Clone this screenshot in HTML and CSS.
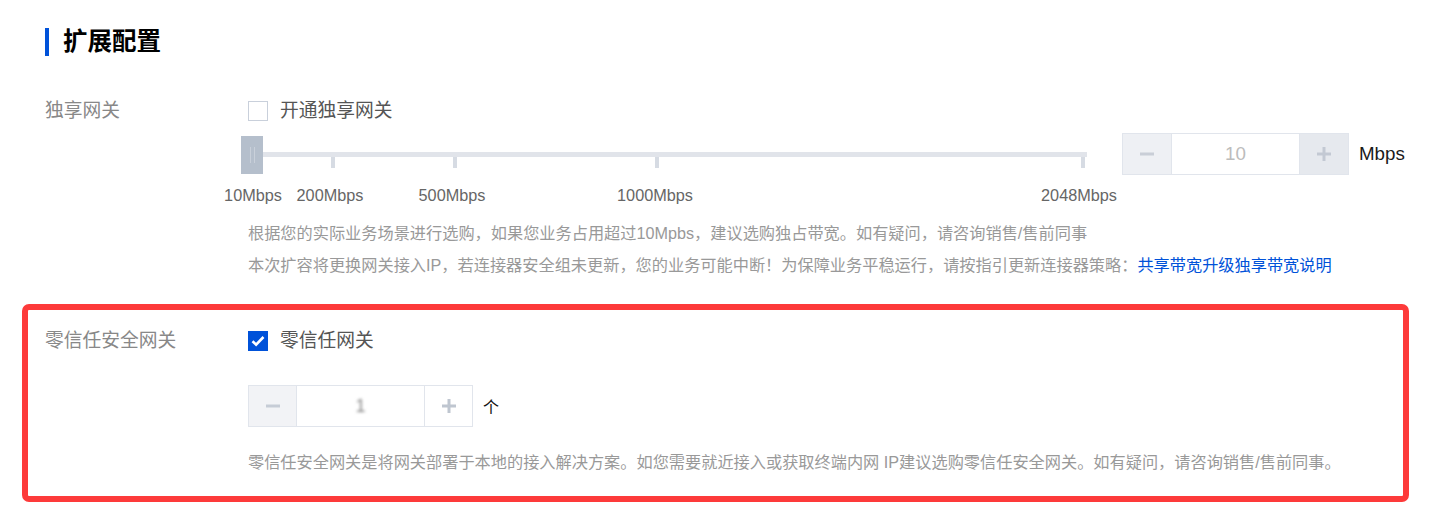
FILE: index.html
```html
<!DOCTYPE html>
<html lang="zh-CN">
<head>
<meta charset="utf-8">
<title>扩展配置</title>
<link rel="stylesheet" href="styles.css">
</head>
<body>
<div class="page">
  <h2 class="heading">扩展配置</h2>

  <div class="row row-first">
    <div class="label">独享网关</div>
    <div class="field">
      <label class="check">
        <span class="box"></span>
        <span class="check-text">开通独享网关</span>
      </label>

      <div class="bw-row">
        <div class="slider">
          <div class="track"></div>
          <span class="tick" style="left:90px"></span>
          <span class="tick" style="left:212px"></span>
          <span class="tick" style="left:414px"></span>
          <span class="tick" style="left:840px"></span>
          <div class="handle"><i></i><i></i></div>
        </div>
        <div class="stepper stepper-bw">
          <span class="step-btn minus"><svg width="16" height="16" viewBox="0 0 16 16"><path d="M1 8h14" stroke="currentColor" stroke-width="3"/></svg></span>
          <span class="step-val">10</span>
          <span class="step-btn plus"><svg width="16" height="16" viewBox="0 0 16 16"><path d="M1 8h14M8 1v14" stroke="currentColor" stroke-width="3"/></svg></span>
        </div>
        <span class="unit-lg">Mbps</span>
      </div>
      <div class="scale">
        <span class="mark" style="left:12px">10Mbps</span>
        <span class="mark" style="left:89px">200Mbps</span>
        <span class="mark" style="left:211px">500Mbps</span>
        <span class="mark" style="left:414px">1000Mbps</span>
        <span class="mark" style="left:838px">2048Mbps</span>
      </div>
      <div class="help help-bw">
        <p>根据您的实际业务场景进行选购，如果您业务占用超过10Mpbs，建议选购独占带宽。如有疑问，请咨询销售/售前同事</p>
        <p>本次扩容将更换网关接入IP，若连接器安全组未更新，您的业务可能中断！为保障业务平稳运行，请按指引更新连接器策略：<a class="link" href="#">共享带宽升级独享带宽说明</a></p>
      </div>
    </div>
  </div>

  <section class="highlight">
    <div class="row">
      <div class="label label-zt">零信任安全网关</div>
      <div class="field">
        <label class="check">
          <span class="box checked"><svg width="14" height="12" viewBox="0 0 14 12"><path d="M1.5 6.2l3.6 3.4L12.5 2" fill="none" stroke="#fff" stroke-width="2.6"/></svg></span>
          <span class="check-text">零信任网关</span>
        </label>
        <div class="zt-row">
          <div class="stepper stepper-zt">
            <span class="step-btn minus"><svg width="16" height="16" viewBox="0 0 16 16"><path d="M1 8h14" stroke="currentColor" stroke-width="3"/></svg></span>
            <span class="step-val"><span class="blurred">1</span></span>
            <span class="step-btn plus"><svg width="16" height="16" viewBox="0 0 16 16"><path d="M1 8h14M8 1v14" stroke="currentColor" stroke-width="3"/></svg></span>
          </div>
          <span class="unit-sm">个</span>
        </div>
        <div class="help help-zt">
          <p>零信任安全网关是将网关部署于本地的接入解决方案。如您需要就近接入或获取终端内网 IP建议选购零信任安全网关。如有疑问，请咨询销售/售前同事。</p>
        </div>
      </div>
    </div>
  </section>
</div>
</body>
</html>
```

FILE: styles.css
```css
* { box-sizing: border-box; }
html, body { margin: 0; padding: 0; background: #fff; }
body {
  font-family: "Liberation Sans", "Noto Sans CJK SC", sans-serif;
  color: #333;
  width: 1451px;
  height: 516px;
  overflow: hidden;
}
.page { padding-top: 28px; }

.heading {
  margin: 0 0 0 45px;
  height: 28px;
  line-height: 28px;
  border-left: 4px solid #0052d9;
  padding-left: 14px;
  font-size: 24.5px;
  font-weight: 700;
  color: #000;
}

.row {
  display: grid;
  grid-template-columns: 203px 1fr;
}
.row-first { margin-top: 45px; padding-left: 45px; }

.label {
  font-size: 18.75px;
  line-height: 20px;
  color: #888;
}

.field { min-width: 0; }

.check {
  display: flex;
  align-items: center;
  gap: 12px;
  height: 20px;
}
.box {
  width: 20px;
  height: 20px;
  border: 1px solid #c9d0db;
  background: #fff;
  display: flex;
  align-items: center;
  justify-content: center;
}
.box.checked { background: #0052d9; border-color: #0052d9; }
.check-text {
  font-size: 18.75px;
  line-height: 20px;
  color: #555;
}

/* bandwidth slider row */
.bw-row {
  display: flex;
  align-items: center;
  margin-top: 12px;
  margin-left: -7px;
  height: 42px;
}
.slider {
  position: relative;
  width: 846px;
  height: 38px;
  margin-top: 2px;
}
.track {
  position: absolute;
  left: 11px;
  right: 0;
  top: 16px;
  height: 5px;
  background: #e1e4ea;
}
.tick {
  position: absolute;
  top: 21px;
  width: 4px;
  height: 11px;
  background: #d6dbe3;
}
.handle {
  position: absolute;
  left: 0;
  top: 0;
  width: 22px;
  height: 38px;
  background: #b5bfcc;
  display: flex;
  justify-content: center;
  align-items: center;
  gap: 3px;
}
.handle i {
  display: block;
  width: 1px;
  height: 16px;
  background: #c9d0da;
}

.stepper {
  display: flex;
  height: 42px;
  border: 1px solid #e1e5ec;
}
.stepper-bw { margin-left: 35px; width: 227px; }
.step-btn {
  width: 48px;
  display: flex;
  align-items: center;
  justify-content: center;
}
.step-val {
  flex: 1;
  display: flex;
  align-items: center;
  justify-content: center;
  border-left: 1px solid #e1e5ec;
  border-right: 1px solid #e1e5ec;
  background: #fff;
  font-size: 18.75px;
  color: #bcbcbc;
}
.stepper-bw .minus { background: #eef0f4; color: #c9ced7; }
.stepper-bw .plus { background: #e6e9ee; color: #c3c9d3; }
.unit-lg {
  margin-left: 10px;
  font-size: 18.75px;
  color: #1a1a1a;
}

.scale {
  position: relative;
  height: 20px;
  margin-top: 10px;
  margin-left: -7px;
}
.mark {
  position: absolute;
  top: 0;
  transform: translateX(-50%);
  font-size: 16.25px;
  line-height: 20px;
  color: #666;
  white-space: nowrap;
}

.help p {
  margin: 0;
  font-size: 16.2px;
  line-height: 32px;
  color: #999;
  white-space: nowrap;
}
.help-bw { margin-top: 12px; }
.link { color: #0052d9; text-decoration: none; }

/* red annotation box */
.highlight {
  margin: 23px 0 0 22px;
  width: 1387px;
  border: 6px solid #fd3a3a;
  border-radius: 7px;
  padding: 21px 0 18px 17px;
}

.zt-row {
  display: flex;
  align-items: center;
  margin-top: 34px;
}
.stepper-zt { width: 225px; }
.stepper-zt .step-btn { width: 47px; }
.stepper-zt .minus { background: #f2f3f6; color: #c6ccd6; }
.stepper-zt .plus { background: #fff; color: #bfc6d0; }
.blurred {
  display: inline-block;
  color: #888;
  filter: blur(1.6px);
  font-size: 18px;
}
.unit-sm {
  margin-left: 10px;
  font-size: 16px;
  color: #111;
}
.help-zt { margin-top: 19px; }
```
